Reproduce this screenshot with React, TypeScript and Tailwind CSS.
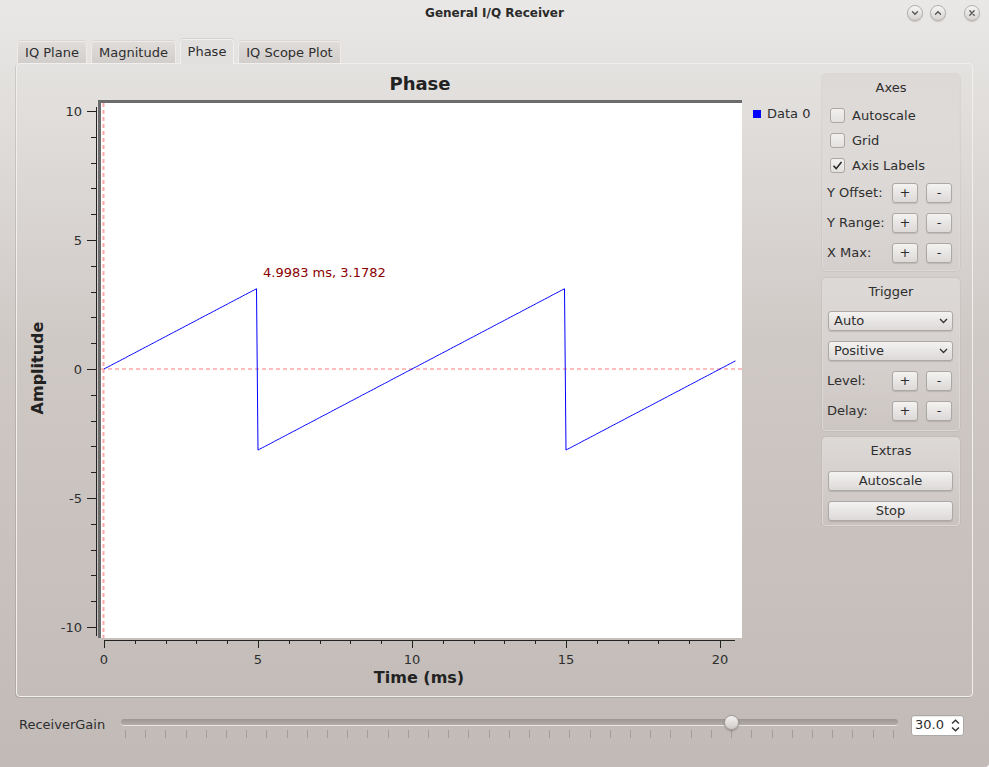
import React from 'react';

const FONT = { fontFamily: '"DejaVu Sans", "Liberation Sans", sans-serif' };

const tx = (t: number) => 104 + t * 30.8;
const ty = (v: number) => 369 - v * 25.8;

const phasePoints = () => {
  const pts: string[] = [];
  for (let i = 0; i <= 410; i++) {
    const t = i * 0.05;
    let p = ((t * Math.PI) / 5 + Math.PI) % (2 * Math.PI);
    p = p - Math.PI;
    pts.push(`${tx(t).toFixed(1)},${ty(p).toFixed(1)}`);
  }
  return pts.join(' ');
};

const TitleButton = ({ glyph }: { glyph: 'down' | 'up' | 'close' }) => (
  <div className="w-[16px] h-[16px] rounded-full border border-[#b3afac] bg-linear-to-b from-[#f7f6f5] to-[#d6d3d1] flex items-center justify-center shadow-[0_1px_1px_rgba(0,0,0,0.15)]">
    <svg width="8" height="8" viewBox="0 0 8 8" fill="none" stroke="#555" strokeWidth="1.3" strokeLinecap="round">
      {glyph === 'down' && <path d="M1.5 2.8 L4 5.3 L6.5 2.8" />}
      {glyph === 'up' && <path d="M1.5 5.2 L4 2.7 L6.5 5.2" />}
      {glyph === 'close' && <path d="M1.8 1.8 L6.2 6.2 M6.2 1.8 L1.8 6.2" />}
    </svg>
  </div>
);

const Tab = ({ label, width, active }: { label: string; width: string; active?: boolean }) => (
  <div
    className={`${width} flex items-center justify-center rounded-t-[4px] border border-b-0 text-[13px] text-[#2e2e2e] ${
      active
        ? 'h-[25px] z-10 relative border-[#f2f0ee] bg-[#e2e0de] shadow-[0_-1px_0_rgba(0,0,0,0.08)]'
        : 'h-[22px] mb-[1px] border-[#eeebe9] bg-linear-to-b from-[#dfdcda] to-[#d2cecb] shadow-[0_-1px_0_rgba(0,0,0,0.06)]'
    }`}
  >
    {label}
  </div>
);

const Check = ({ label, checked }: { label: string; checked?: boolean }) => (
  <div className="h-[25px] flex items-center pl-[7px] gap-[7px] text-[13px] text-[#2e2e2e]">
    <div className="w-[15px] h-[15px] rounded-[3px] border border-[#aba7a4] bg-linear-to-b from-[#f2f1f0] to-[#e3e1df] flex items-center justify-center">
      {checked && (
        <svg width="11" height="11" viewBox="0 0 11 11" fill="none" stroke="#222" strokeWidth="1.5">
          <path d="M1.5 5.8 L4.2 8.6 L9.5 2" />
        </svg>
      )}
    </div>
    <span>{label}</span>
  </div>
);

const SmallButton = ({ children }: { children: React.ReactNode }) => (
  <div className="w-[26px] h-[20px] rounded-[3px] border border-[#aca8a5] bg-linear-to-b from-[#f4f3f2] to-[#dcd9d7] shadow-[0_1px_1px_rgba(0,0,0,0.12)] flex items-center justify-center text-[13px] text-[#2e2e2e]">
    {children}
  </div>
);

const PlusMinusRow = ({ label }: { label: string }) => (
  <div className="h-[30px] flex items-center pl-[4px] text-[13px] text-[#2e2e2e]">
    <span className="w-[65px]">{label}</span>
    <div className="flex gap-[8px]">
      <SmallButton>+</SmallButton>
      <SmallButton>-</SmallButton>
    </div>
  </div>
);

const WideButton = ({ label }: { label: string }) => (
  <div className="ml-[5px] w-[125px] h-[20px] rounded-[3px] border border-[#aca8a5] bg-linear-to-b from-[#f4f3f2] to-[#dcd9d7] shadow-[0_1px_1px_rgba(0,0,0,0.12)] flex items-center justify-center text-[13px] text-[#2e2e2e]">
    {label}
  </div>
);

const Combo = ({ label }: { label: string }) => (
  <div className="ml-[5px] w-[125px] h-[20px] rounded-[3px] border border-[#aca8a5] bg-linear-to-b from-[#f4f3f2] to-[#dcd9d7] shadow-[0_1px_1px_rgba(0,0,0,0.12)] flex items-center justify-between pl-[5px] pr-[4px] text-[13px] text-[#2e2e2e]">
    <span>{label}</span>
    <svg width="9" height="6" viewBox="0 0 9 6" fill="none" stroke="#333" strokeWidth="1.3">
      <path d="M1 1 L4.5 4.5 L8 1" />
    </svg>
  </div>
);

const Group = ({ title, children, className }: { title: string; children: React.ReactNode; className?: string }) => (
  <div className={`w-[138px] rounded-[4px] border border-[#dcd8d5] bg-linear-to-b from-[#ddd9d7] to-transparent shadow-[0_0_0_1px_rgba(0,0,0,0.04)] ${className ?? ''}`}>
    <div className="h-[26px] flex items-center justify-center text-[13px] text-[#2e2e2e]">{title}</div>
    {children}
  </div>
);

const PlotArea = () => {
  const yTicks = Array.from({ length: 21 }, (_, i) => i - 10);
  const xTicks = Array.from({ length: 21 }, (_, i) => i);
  return (
    <svg width="798" height="632" viewBox="17 64 798 632" style={FONT}>
      <text x="420" y="90" textAnchor="middle" fontSize="18" fontWeight="bold" fill="#222">Phase</text>

      <rect x="98" y="100" width="644" height="538" fill="#6c6c6c" />
      <rect x="101" y="103" width="641" height="535" fill="#ffffff" />

      <line x1="103.5" y1="103" x2="103.5" y2="638" stroke="#ffa8a8" strokeWidth="2" strokeDasharray="4 3" />
      <line x1="101" y1="369" x2="742" y2="369" stroke="#ffa8a8" strokeWidth="1.5" strokeDasharray="4 3" />

      <polyline points={phasePoints()} fill="none" stroke="#0000ff" strokeWidth="1" />

      <text x="263" y="277" fontSize="13" fill="#8b0000">4.9983 ms, 3.1782</text>

      <line x1="96.5" y1="107" x2="96.5" y2="636" stroke="#222" strokeWidth="1" />
      {yTicks.map(v => (
        <line key={v} x1={v % 5 === 0 ? 87 : 91} y1={Math.round(ty(v)) + 0.5} x2="96" y2={Math.round(ty(v)) + 0.5} stroke="#222" strokeWidth="1" />
      ))}
      {[10, 5, 0, -5, -10].map(v => (
        <text key={v} x="82" y={ty(v) + 4.5} textAnchor="end" fontSize="13" fill="#2e2e2e">{v}</text>
      ))}

      <line x1="104" y1="640.5" x2="735" y2="640.5" stroke="#222" strokeWidth="1" />
      {xTicks.map(t => (
        <line key={t} x1={Math.round(tx(t)) + 0.5} y1="640" x2={Math.round(tx(t)) + 0.5} y2={t % 5 === 0 ? 648 : 644} stroke="#222" strokeWidth="1" />
      ))}
      {[0, 5, 10, 15, 20].map(t => (
        <text key={t} x={tx(t)} y="664" textAnchor="middle" fontSize="13" fill="#2e2e2e">{t}</text>
      ))}

      <text x="419" y="683" textAnchor="middle" fontSize="16" fontWeight="bold" fill="#222">Time (ms)</text>
      <text x="37" y="368" textAnchor="middle" dominantBaseline="central" fontSize="16" fontWeight="bold" fill="#222" transform="rotate(-90 37 368)">Amplitude</text>

      <rect x="753" y="110" width="8" height="8" fill="#0000ff" />
      <text x="767" y="118" fontSize="13" fill="#2e2e2e">Data 0</text>
    </svg>
  );
};

const GainSlider = () => (
  <div className="relative w-[777px] h-[26px]">
    <div className="mt-[7px] h-[6px] rounded-full bg-linear-to-b from-[#9d9793] to-[#b3ada9] shadow-[0_1px_0_rgba(255,255,255,0.6)]" />
    <div className="absolute left-[603px] top-[3px] w-[15px] h-[15px] rounded-full border border-[#9f9a97] bg-linear-to-b from-[#f4f3f2] to-[#cfcbc8] shadow-[0_1px_2px_rgba(0,0,0,0.25)]" />
    <div className="mt-[5px] mx-[4px] flex justify-between">
      {Array.from({ length: 39 }, (_, i) => (
        <div key={i} className="w-px h-[8px] bg-[#a39d99]" />
      ))}
    </div>
  </div>
);

const SpinBox = () => (
  <div className="w-[53px] h-[21px] rounded-[3px] border border-[#aca8a5] bg-white flex items-center justify-between pl-[3px] pr-[3px] text-[13px] text-[#2e2e2e] shadow-[inset_0_1px_1px_rgba(0,0,0,0.08)]">
    <span>30.0</span>
    <svg width="9" height="13" viewBox="0 0 9 13" fill="none" stroke="#333" strokeWidth="1.4">
      <path d="M1 4.5 L4.5 1.2 L8 4.5 M1 8.5 L4.5 11.8 L8 8.5" />
    </svg>
  </div>
);

export default function App() {
  return (
    <div
      className="w-[989px] h-[767px] overflow-hidden rounded-br-[4px] bg-linear-to-b from-[#e9e8e6] via-[#cfc9c6] via-45% to-[#c1bab6] text-[#2e2e2e]"
      style={FONT}
    >
      <div className="h-[26px] grid grid-cols-[1fr_auto_1fr] items-center">
        <div />
        <div className="text-[12px] font-bold text-[#2b2b2b]">General I/Q Receiver</div>
        <div className="flex justify-end items-center pr-[9px]">
          <TitleButton glyph="down" />
          <div className="ml-[7px]"><TitleButton glyph="up" /></div>
          <div className="ml-[18px]"><TitleButton glyph="close" /></div>
        </div>
      </div>

      <div className="mt-[13px] h-[25px] pl-[17px] flex items-end gap-[4px]">
        <Tab label="IQ Plane" width="w-[70px]" />
        <Tab label="Magnitude" width="w-[85px]" />
        <Tab label="Phase" width="w-[54px]" active />
        <Tab label="IQ Scope Plot" width="w-[103px]" />
      </div>

      <div className="-mt-px ml-[16px] w-[957px] h-[634px] rounded-[4px] border border-[#f1efed] shadow-[-1px_1px_0_rgba(0,0,0,0.1)] flex">
        <PlotArea />
        <div className="ml-[7px] mt-[10px] flex flex-col">
          <Group title="Axes" className="h-[197px]">
            <div className="mt-[2px]">
              <Check label="Autoscale" />
              <Check label="Grid" />
              <Check label="Axis Labels" checked />
            </div>
            <PlusMinusRow label="Y Offset:" />
            <PlusMinusRow label="Y Range:" />
            <PlusMinusRow label="X Max:" />
          </Group>
          <Group title="Trigger" className="mt-[7px] h-[153px]">
            <div className="mt-[6px]"><Combo label="Auto" /></div>
            <div className="mt-[10px]"><Combo label="Positive" /></div>
            <div className="mt-[5px]">
              <PlusMinusRow label="Level:" />
              <PlusMinusRow label="Delay:" />
            </div>
          </Group>
          <Group title="Extras" className="mt-[6px] h-[89px]">
            <div className="mt-[7px]"><WideButton label="Autoscale" /></div>
            <div className="mt-[10px]"><WideButton label="Stop" /></div>
          </Group>
        </div>
      </div>

      <div className="mt-[15px] h-[26px] flex items-center">
        <span className="ml-[19px] w-[102px] text-[13px]">ReceiverGain</span>
        <GainSlider />
        <div className="ml-[13px]"><SpinBox /></div>
      </div>
    </div>
  );
}
